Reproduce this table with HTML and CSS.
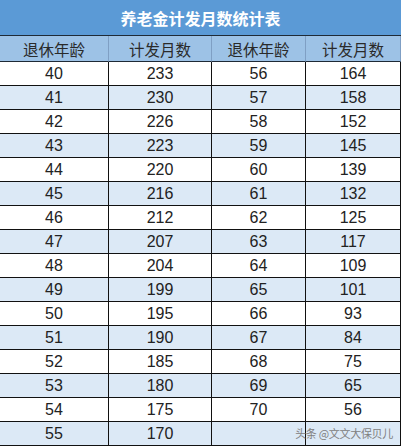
FILE: index.html
```html
<!DOCTYPE html>
<html lang="zh">
<head>
<meta charset="utf-8">
<title>养老金计发月数统计表</title>
<link rel="stylesheet" href="styles.css">
</head>
<body>
<div class="sheet">
  <div class="title">养老金计发月数统计表</div>
  <div class="grid">
    <div class="cell head">退休年龄</div>
    <div class="cell head">计发月数</div>
    <div class="cell head">退休年龄</div>
    <div class="cell head">计发月数</div>

    <div class="cell">40</div><div class="cell">233</div><div class="cell">56</div><div class="cell">164</div>
    <div class="cell alt">41</div><div class="cell alt">230</div><div class="cell alt">57</div><div class="cell alt">158</div>
    <div class="cell">42</div><div class="cell">226</div><div class="cell">58</div><div class="cell">152</div>
    <div class="cell alt">43</div><div class="cell alt">223</div><div class="cell alt">59</div><div class="cell alt">145</div>
    <div class="cell">44</div><div class="cell">220</div><div class="cell">60</div><div class="cell">139</div>
    <div class="cell alt">45</div><div class="cell alt">216</div><div class="cell alt">61</div><div class="cell alt">132</div>
    <div class="cell">46</div><div class="cell">212</div><div class="cell">62</div><div class="cell">125</div>
    <div class="cell alt">47</div><div class="cell alt">207</div><div class="cell alt">63</div><div class="cell alt">117</div>
    <div class="cell">48</div><div class="cell">204</div><div class="cell">64</div><div class="cell">109</div>
    <div class="cell alt">49</div><div class="cell alt">199</div><div class="cell alt">65</div><div class="cell alt">101</div>
    <div class="cell">50</div><div class="cell">195</div><div class="cell">66</div><div class="cell">93</div>
    <div class="cell alt">51</div><div class="cell alt">190</div><div class="cell alt">67</div><div class="cell alt">84</div>
    <div class="cell">52</div><div class="cell">185</div><div class="cell">68</div><div class="cell">75</div>
    <div class="cell alt">53</div><div class="cell alt">180</div><div class="cell alt">69</div><div class="cell alt">65</div>
    <div class="cell">54</div><div class="cell">175</div><div class="cell">70</div><div class="cell">56</div>
    <div class="cell alt">55</div><div class="cell alt">170</div><div class="cell alt"></div><div class="cell alt"></div>
  </div>
  <div class="watermark">头条 @文文大保贝儿</div>
</div>
</body>
</html>
```
FILE: styles.css
```css
html, body {
  margin: 0;
  padding: 0;
  background: #ffffff;
}
.sheet {
  position: relative;
  width: 401px;
  height: 446px;
  overflow: hidden;
}
.title {
  box-sizing: border-box;
  height: 36px;
  border-bottom: 1px solid #1f2a36;
  background: #5b9ad6;
  color: #ffffff;
  font-family: "Noto Sans CJK SC", sans-serif;
  font-weight: 700;
  font-size: 16px;
  display: flex;
  align-items: center;
  justify-content: center;
  letter-spacing: 0;
  padding-top: 1px;
}
.grid {
  display: grid;
  grid-template-columns: 109px 103px 94px 95px;
  grid-template-rows: 26px repeat(16, 24px);
}
.cell {
  box-sizing: border-box;
  border-right: 1px solid #111111;
  border-bottom: 1px solid #111111;
  background: #ffffff;
  color: #222222;
  font-family: "Liberation Sans", "Noto Sans CJK SC", sans-serif;
  font-size: 16px;
  display: flex;
  align-items: center;
  justify-content: center;
}
.cell.alt {
  background: #dce9f6;
}
.cell.head {
  background: #9dc2e6;
  border-right-color: #7f9fc4;
  border-bottom-color: #1f2a36;
  font-family: "Noto Sans CJK SC", sans-serif;
  font-size: 15.5px;
  color: #2a2a2a;
}
.cell:nth-child(4n+1) {
  border-left: none;
}
.watermark {
  position: absolute;
  right: 8px;
  bottom: 5px;
  font-family: "Noto Sans CJK SC", sans-serif;
  font-size: 11px;
  color: #808080;
  letter-spacing: -0.3px;
}
```
